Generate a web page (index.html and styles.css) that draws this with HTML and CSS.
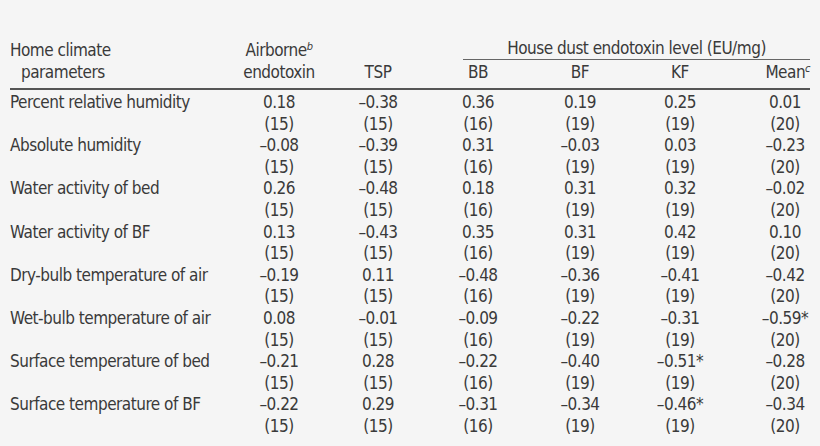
FILE: index.html
```html
<!DOCTYPE html>
<html>
<head>
<meta charset="utf-8">
<link rel="stylesheet" href="styles.css">
</head>
<body>
<div class="page">
<table class="tbl">
  <colgroup>
    <col class="c-label"><col class="c-air"><col class="c-tsp"><col class="c-bb"><col class="c-bf"><col class="c-kf"><col class="c-mean">
  </colgroup>
  <thead>
    <tr class="h1">
      <th class="lab">Home climate</th>
      <th>Airborne<sup>b</sup></th>
      <th></th>
      <th colspan="4" class="span"><div class="spanner">House dust endotoxin level (EU/mg)</div></th>
    </tr>
    <tr class="h2">
      <th class="lab indent">parameters</th>
      <th>endotoxin</th>
      <th>TSP</th>
      <th>BB</th>
      <th>BF</th>
      <th>KF</th>
      <th class="mean-h">Mean<sup>c</sup></th>
    </tr>
  </thead>
  <tbody>
    <tr><td class="lab">Percent relative humidity</td><td>0.18</td><td>–0.38</td><td>0.36</td><td>0.19</td><td>0.25</td><td class="m">0.01</td></tr>
    <tr><td></td><td>(15)</td><td>(15)</td><td>(16)</td><td>(19)</td><td>(19)</td><td class="m">(20)</td></tr>
    <tr><td class="lab">Absolute humidity</td><td>–0.08</td><td>–0.39</td><td>0.31</td><td>–0.03</td><td>0.03</td><td class="m">–0.23</td></tr>
    <tr><td></td><td>(15)</td><td>(15)</td><td>(16)</td><td>(19)</td><td>(19)</td><td class="m">(20)</td></tr>
    <tr><td class="lab">Water activity of bed</td><td>0.26</td><td>–0.48</td><td>0.18</td><td>0.31</td><td>0.32</td><td class="m">–0.02</td></tr>
    <tr><td></td><td>(15)</td><td>(15)</td><td>(16)</td><td>(19)</td><td>(19)</td><td class="m">(20)</td></tr>
    <tr><td class="lab">Water activity of BF</td><td>0.13</td><td>–0.43</td><td>0.35</td><td>0.31</td><td>0.42</td><td class="m">0.10</td></tr>
    <tr><td></td><td>(15)</td><td>(15)</td><td>(16)</td><td>(19)</td><td>(19)</td><td class="m">(20)</td></tr>
    <tr><td class="lab">Dry-bulb temperature of air</td><td>–0.19</td><td>0.11</td><td>–0.48</td><td>–0.36</td><td>–0.41</td><td class="m">–0.42</td></tr>
    <tr><td></td><td>(15)</td><td>(15)</td><td>(16)</td><td>(19)</td><td>(19)</td><td class="m">(20)</td></tr>
    <tr><td class="lab">Wet-bulb temperature of air</td><td>0.08</td><td>–0.01</td><td>–0.09</td><td>–0.22</td><td>–0.31</td><td class="m">–0.59*</td></tr>
    <tr><td></td><td>(15)</td><td>(15)</td><td>(16)</td><td>(19)</td><td>(19)</td><td class="m">(20)</td></tr>
    <tr><td class="lab">Surface temperature of bed</td><td>–0.21</td><td>0.28</td><td>–0.22</td><td>–0.40</td><td>–0.51*</td><td class="m">–0.28</td></tr>
    <tr><td></td><td>(15)</td><td>(15)</td><td>(16)</td><td>(19)</td><td>(19)</td><td class="m">(20)</td></tr>
    <tr><td class="lab">Surface temperature of BF</td><td>–0.22</td><td>0.29</td><td>–0.31</td><td>–0.34</td><td>–0.46*</td><td class="m">–0.34</td></tr>
    <tr><td></td><td>(15)</td><td>(15)</td><td>(16)</td><td>(19)</td><td>(19)</td><td class="m">(20)</td></tr>
  </tbody>
</table>
</div>
</body>
</html>
```
FILE: styles.css
```css
html, body {
  margin: 0;
  padding: 0;
  background: #f5f5f5;
}
.page {
  padding: 38px 10px 0 10px;
  font-family: "DejaVu Sans Condensed", "DejaVu Sans", sans-serif;
  font-stretch: condensed;
  font-size: 17px;
  letter-spacing: -0.5px;
  color: #3a3a3a;
}
.tbl {
  width: 800px;
  border-collapse: collapse;
  table-layout: fixed;
}
.c-label { width: 220px; }
.c-air { width: 98px; }
.c-tsp { width: 100px; }
.c-bb { width: 100px; }
.c-bf { width: 104px; }
.c-kf { width: 96px; }
.c-mean { width: 82px; }
th, td {
  padding: 0;
  text-align: center;
  font-weight: normal;
  white-space: nowrap;
  vertical-align: top;
}
th { line-height: 22px; }
td { line-height: 21.6px; }
.lab { text-align: left; }
.indent { padding-left: 11px; }
.h1 th { height: 22px; padding-top: 1px; }
.h1 th.span { padding-top: 0; }
.h2 th { padding-bottom: 5px; border-bottom: 2px solid #555; }
.spanner {
  margin-left: 35px;
  line-height: 21px;
  border-bottom: 1px solid #666;
}
sup {
  font-style: italic;
  font-size: 11px;
  line-height: 0;
  vertical-align: 6px;
}
.mean-h { text-align: right; }
td.m { padding-left: 32px; }
tbody tr:first-child td { padding-top: 2px; }
```
